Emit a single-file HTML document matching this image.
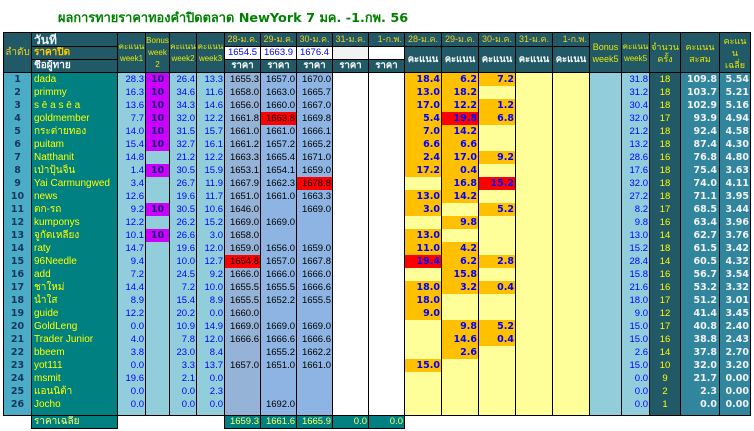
<!DOCTYPE html>
<html lang="th">
<head>
<meta charset="utf-8">
<title>ผลการทายราคาทองคำปิดตลาด</title>
<style>
html,body{margin:0;padding:0;background:#fff;width:754px;height:431px;overflow:hidden}
body{position:relative;font-family:"Liberation Sans","Noto Sans CJK SC",sans-serif}
h1{position:absolute;left:58px;top:11px;margin:0;font:bold 12.8px/16px "DejaVu Sans","Noto Sans CJK SC",sans-serif;color:#008000;white-space:nowrap}
table{position:absolute;left:3px;top:32px;width:748px;table-layout:fixed;border-collapse:separate;border-spacing:0;font-size:9.5px}
td,th{padding:0 1px;border-right:1px solid #000;box-sizing:border-box;white-space:nowrap;overflow:hidden;height:13px;line-height:13px;font-weight:normal}
thead th{background:#215967;border-bottom:1px solid #000;color:#e8e800;text-align:center;font-size:8px;line-height:12px;padding:0}
thead tr:first-child th{border-top:1px solid #000;height:15px}
thead th.f{border-left:1px solid #000;font-size:10px;color:#f0d020}
thead th.b{font-size:9px}
thead th.n{text-align:left;padding-left:2px;color:#e8f4f8;font:bold 10px/12px "DejaVu Sans","Noto Sans CJK SC",sans-serif}
thead th.y{color:#ffc800}
thead th.big{font-size:12px}
thead th.d{color:#f0d020;font-size:9px;line-height:13px}
thead th.rt{text-align:right;padding-right:2px}
thead th.w{color:#fff;font:bold 9.5px/12px "DejaVu Sans","Noto Sans CJK SC",sans-serif}
thead th.i{background:#fff;color:#0000ff;font-size:9.5px;line-height:12px}
thead th.g{background:#f2f2f2}
thead th.e{background:#fff}
tbody td{text-align:right;color:#0000ff;background:#92cddc}
tbody td:nth-child(1){border-left:1px solid #000;background:#4bacc6;text-align:center;color:#17375e;font:bold 9.5px/13px "DejaVu Sans",sans-serif}
tbody td:nth-child(2){background:#008080;color:#ffff00;text-align:left;padding-left:2px;font-size:10px}
tbody td:nth-child(4){text-align:center;color:#1a1a6e;font:bold 9.5px/13px "DejaVu Sans",sans-serif}
tbody td:nth-child(7){background:#95b3d7;color:#000}
tbody td:nth-child(8),tbody td:nth-child(9){background:#8db4e2;color:#000}
tbody td:nth-child(10),tbody td:nth-child(11){background:#fff}
tbody td:nth-child(n+12):nth-child(-n+16){background:#ffff99;font:bold 9.5px/13px "DejaVu Sans",sans-serif}
tbody td:nth-child(19){background:#215967;color:#ffff00;text-align:center}
tbody td:nth-child(20),tbody td:nth-child(21){background:#31859c;color:#f2f2f2;font:bold 9.5px/13px "DejaVu Sans",sans-serif}
tbody td:nth-child(20){padding-right:2px}
tbody td.p{background:#cc00ff!important}
tbody td.o{background:#ffc000!important}
tbody td.r{background:#ff0000!important}
tbody tr.sp td{height:5px;line-height:0;border-bottom:1px solid #000}
tfoot td{height:13px;line-height:12px;border-bottom:1px solid #000;color:#ffff66;background:#008080;text-align:right}
tfoot td.b{background:transparent;border-right:0;border-bottom:0}
tfoot td.a{background:transparent;border-bottom:0}
tfoot td.n{text-align:left;padding-left:2px;font-size:10px}
</style>
</head>
<body>
<h1>ผลการทายราคาทองคำปิดตลาด NewYork 7 มค. -1.กพ. 56</h1>
<table>
<colgroup>
<col style="width:29px"><col style="width:86px"><col style="width:28px"><col style="width:24px"><col style="width:27px"><col style="width:28px">
<col style="width:36px"><col style="width:36px"><col style="width:36px"><col style="width:36px"><col style="width:36px">
<col style="width:37px"><col style="width:37px"><col style="width:37px"><col style="width:37px"><col style="width:37px">
<col style="width:32px"><col style="width:28px"><col style="width:31px"><col style="width:39px"><col style="width:31px">
</colgroup>
<thead>
<tr>
<th class="f" rowspan="3">ลำดับ</th><th class="n big">วันที่</th>
<th rowspan="3">คะแนน<br>week1</th><th rowspan="3">Bonus<br>week<br>2</th><th rowspan="3">คะแนน<br>week2</th><th rowspan="3">คะแนน<br>week3</th>
<th class="d">28-ม.ค.</th><th class="d">29-ม.ค.</th><th class="d">30-ม.ค.</th><th class="d">31-ม.ค.</th><th class="d rt">1-ก.พ.</th>
<th class="d">28-ม.ค.</th><th class="d">29-ม.ค.</th><th class="d">30-ม.ค.</th><th class="d">31-ม.ค.</th><th class="d rt">1-ก.พ.</th>
<th class="b" rowspan="3">Bonus<br>week5</th><th rowspan="3">คะแนน<br>week5</th><th class="b" rowspan="3">จำนวน<br>ครั้ง</th><th class="b" rowspan="3">คะแนน<br>สะสม</th><th class="b" rowspan="3">คะแน<br>น<br>เฉลี่ย</th>
</tr>
<tr>
<th class="n y">ราคาปิด</th>
<th class="i">1654.5</th><th class="i">1663.9</th><th class="i">1676.4</th><th class="i g"></th><th class="i e"></th>
<th class="w" rowspan="2">คะแนน</th><th class="w" rowspan="2">คะแนน</th><th class="w" rowspan="2">คะแนน</th><th class="w" rowspan="2">คะแนน</th><th class="w" rowspan="2">คะแนน</th>
</tr>
<tr>
<th class="n">ชื่อผู้ทาย</th>
<th class="w">ราคา</th><th class="w">ราคา</th><th class="w">ราคา</th><th class="w">ราคา</th><th class="w">ราคา</th>
</tr>
</thead>
<tbody>
<tr><td>1</td><td>dada</td><td>28.3</td><td class="p">10</td><td>26.4</td><td>13.3</td><td>1655.3</td><td>1657.0</td><td>1670.0</td><td></td><td></td><td class="o">18.4</td><td class="o">6.2</td><td class="o">7.2</td><td></td><td></td><td></td><td>31.8</td><td>18</td><td>109.8</td><td>5.54</td></tr>
<tr><td>2</td><td>primmy</td><td>16.3</td><td class="p">10</td><td>34.6</td><td>11.6</td><td>1658.0</td><td>1663.0</td><td>1665.7</td><td></td><td></td><td class="o">13.0</td><td class="o">18.2</td><td></td><td></td><td></td><td></td><td>31.2</td><td>18</td><td>103.7</td><td>5.21</td></tr>
<tr><td>3</td><td>s ē a s ē a</td><td>13.6</td><td class="p">10</td><td>34.3</td><td>14.6</td><td>1656.0</td><td>1660.0</td><td>1667.0</td><td></td><td></td><td class="o">17.0</td><td class="o">12.2</td><td class="o">1.2</td><td></td><td></td><td></td><td>30.4</td><td>18</td><td>102.9</td><td>5.16</td></tr>
<tr><td>4</td><td>goldmember</td><td>7.7</td><td class="p">10</td><td>32.0</td><td>12.2</td><td>1661.8</td><td class="r">1663.8</td><td>1669.8</td><td></td><td></td><td class="o">5.4</td><td class="r">19.8</td><td class="o">6.8</td><td></td><td></td><td></td><td>32.0</td><td>17</td><td>93.9</td><td>4.94</td></tr>
<tr><td>5</td><td>กระต่ายทอง</td><td>14.0</td><td class="p">10</td><td>31.5</td><td>15.7</td><td>1661.0</td><td>1661.0</td><td>1666.1</td><td></td><td></td><td class="o">7.0</td><td class="o">14.2</td><td></td><td></td><td></td><td></td><td>21.2</td><td>18</td><td>92.4</td><td>4.58</td></tr>
<tr><td>6</td><td>puitam</td><td>15.4</td><td class="p">10</td><td>32.7</td><td>16.1</td><td>1661.2</td><td>1657.2</td><td>1665.2</td><td></td><td></td><td class="o">6.6</td><td class="o">6.6</td><td></td><td></td><td></td><td></td><td>13.2</td><td>18</td><td>87.4</td><td>4.30</td></tr>
<tr><td>7</td><td>Natthanit</td><td>14.8</td><td></td><td>21.2</td><td>12.2</td><td>1663.3</td><td>1665.4</td><td>1671.0</td><td></td><td></td><td class="o">2.4</td><td class="o">17.0</td><td class="o">9.2</td><td></td><td></td><td></td><td>28.6</td><td>16</td><td>76.8</td><td>4.80</td></tr>
<tr><td>8</td><td>เป่าปุ้นจิ้น</td><td>1.4</td><td class="p">10</td><td>30.5</td><td>15.9</td><td>1653.1</td><td>1654.1</td><td>1659.0</td><td></td><td></td><td class="o">17.2</td><td class="o">0.4</td><td></td><td></td><td></td><td></td><td>17.6</td><td>18</td><td>75.4</td><td>3.63</td></tr>
<tr><td>9</td><td>Yai Carmungwed</td><td>3.4</td><td></td><td>26.7</td><td>11.9</td><td>1667.9</td><td>1662.3</td><td class="r">1678.8</td><td></td><td></td><td></td><td class="o">16.8</td><td class="r">15.2</td><td></td><td></td><td></td><td>32.0</td><td>18</td><td>74.0</td><td>4.11</td></tr>
<tr><td>10</td><td>news</td><td>12.6</td><td></td><td>19.6</td><td>11.7</td><td>1651.0</td><td>1661.0</td><td>1663.3</td><td></td><td></td><td class="o">13.0</td><td class="o">14.2</td><td></td><td></td><td></td><td></td><td>27.2</td><td>18</td><td>71.1</td><td>3.95</td></tr>
<tr><td>11</td><td>ตก-รถ</td><td>9.2</td><td class="p">10</td><td>30.5</td><td>10.6</td><td>1646.0</td><td></td><td>1669.0</td><td></td><td></td><td class="o">3.0</td><td></td><td class="o">5.2</td><td></td><td></td><td></td><td>8.2</td><td>17</td><td>68.5</td><td>3.44</td></tr>
<tr><td>12</td><td>kumponys</td><td>12.2</td><td></td><td>26.2</td><td>15.2</td><td>1669.0</td><td>1669.0</td><td></td><td></td><td></td><td></td><td class="o">9.8</td><td></td><td></td><td></td><td></td><td>9.8</td><td>16</td><td>63.4</td><td>3.96</td></tr>
<tr><td>13</td><td>จูกัดเหลียง</td><td>10.1</td><td class="p">10</td><td>26.6</td><td>3.0</td><td>1658.0</td><td></td><td></td><td></td><td></td><td class="o">13.0</td><td></td><td></td><td></td><td></td><td></td><td>13.0</td><td>14</td><td>62.7</td><td>3.76</td></tr>
<tr><td>14</td><td>raty</td><td>14.7</td><td></td><td>19.6</td><td>12.0</td><td>1659.0</td><td>1656.0</td><td>1659.0</td><td></td><td></td><td class="o">11.0</td><td class="o">4.2</td><td></td><td></td><td></td><td></td><td>15.2</td><td>18</td><td>61.5</td><td>3.42</td></tr>
<tr><td>15</td><td>96Needle</td><td>9.4</td><td></td><td>10.0</td><td>12.7</td><td class="r">1654.8</td><td>1657.0</td><td>1667.8</td><td></td><td></td><td class="r">19.4</td><td class="o">6.2</td><td class="o">2.8</td><td></td><td></td><td></td><td>28.4</td><td>14</td><td>60.5</td><td>4.32</td></tr>
<tr><td>16</td><td>add</td><td>7.2</td><td></td><td>24.5</td><td>9.2</td><td>1666.0</td><td>1666.0</td><td>1666.0</td><td></td><td></td><td></td><td class="o">15.8</td><td></td><td></td><td></td><td></td><td>15.8</td><td>16</td><td>56.7</td><td>3.54</td></tr>
<tr><td>17</td><td>ชาใหม่</td><td>14.4</td><td></td><td>7.2</td><td>10.0</td><td>1655.5</td><td>1655.5</td><td>1666.6</td><td></td><td></td><td class="o">18.0</td><td class="o">3.2</td><td class="o">0.4</td><td></td><td></td><td></td><td>21.6</td><td>16</td><td>53.2</td><td>3.32</td></tr>
<tr><td>18</td><td>น้ำใส</td><td>8.9</td><td></td><td>15.4</td><td>8.9</td><td>1655.5</td><td>1652.2</td><td>1655.5</td><td></td><td></td><td class="o">18.0</td><td></td><td></td><td></td><td></td><td></td><td>18.0</td><td>17</td><td>51.2</td><td>3.01</td></tr>
<tr><td>19</td><td>guide</td><td>12.2</td><td></td><td>20.2</td><td>0.0</td><td>1660.0</td><td></td><td></td><td></td><td></td><td class="o">9.0</td><td></td><td></td><td></td><td></td><td></td><td>9.0</td><td>12</td><td>41.4</td><td>3.45</td></tr>
<tr><td>20</td><td>GoldLeng</td><td>0.0</td><td></td><td>10.9</td><td>14.9</td><td>1669.0</td><td>1669.0</td><td>1669.0</td><td></td><td></td><td></td><td class="o">9.8</td><td class="o">5.2</td><td></td><td></td><td></td><td>15.0</td><td>17</td><td>40.8</td><td>2.40</td></tr>
<tr><td>21</td><td>Trader Junior</td><td>4.0</td><td></td><td>7.8</td><td>12.0</td><td>1666.6</td><td>1666.6</td><td>1666.6</td><td></td><td></td><td></td><td class="o">14.6</td><td class="o">0.4</td><td></td><td></td><td></td><td>15.0</td><td>16</td><td>38.8</td><td>2.43</td></tr>
<tr><td>22</td><td>bbeem</td><td>3.8</td><td></td><td>23.0</td><td>8.4</td><td></td><td>1655.2</td><td>1662.2</td><td></td><td></td><td></td><td class="o">2.6</td><td></td><td></td><td></td><td></td><td>2.6</td><td>14</td><td>37.8</td><td>2.70</td></tr>
<tr><td>23</td><td>yot111</td><td>0.0</td><td></td><td>3.3</td><td>13.7</td><td>1657.0</td><td>1651.0</td><td>1661.0</td><td></td><td></td><td class="o">15.0</td><td></td><td></td><td></td><td></td><td></td><td>15.0</td><td>10</td><td>32.0</td><td>3.20</td></tr>
<tr><td>24</td><td>msmit</td><td>19.6</td><td></td><td>2.1</td><td>0.0</td><td></td><td></td><td></td><td></td><td></td><td></td><td></td><td></td><td></td><td></td><td></td><td>0.0</td><td>9</td><td>21.7</td><td>0.00</td></tr>
<tr><td>25</td><td>แอนนิต้า</td><td>0.0</td><td></td><td>0.0</td><td>2.3</td><td></td><td></td><td></td><td></td><td></td><td></td><td></td><td></td><td></td><td></td><td></td><td>0.0</td><td>2</td><td>2.3</td><td>0.00</td></tr>
<tr><td>26</td><td>Jocho</td><td>0.0</td><td></td><td>0.0</td><td>0.0</td><td></td><td>1692.0</td><td></td><td></td><td></td><td></td><td></td><td></td><td></td><td></td><td></td><td>0.0</td><td>1</td><td>0.0</td><td>0.00</td></tr>
<tr class="sp"><td></td><td></td><td></td><td></td><td></td><td></td><td></td><td></td><td></td><td></td><td></td><td></td><td></td><td></td><td></td><td></td><td></td><td></td><td></td><td></td><td></td></tr>
</tbody>
<tfoot>
<tr>
<td class="a"></td><td class="n">ราคาเฉลี่ย</td><td class="b"></td><td class="b"></td><td class="b"></td><td class="a"></td>
<td>1659.3</td><td>1661.6</td><td>1665.9</td><td>0.0</td><td>0.0</td>
<td class="b"></td><td class="b"></td><td class="b"></td><td class="b"></td><td class="b"></td><td class="b"></td><td class="b"></td><td class="b"></td><td class="b"></td><td class="b"></td>
</tr>
</tfoot>
</table>
</body>
</html>
